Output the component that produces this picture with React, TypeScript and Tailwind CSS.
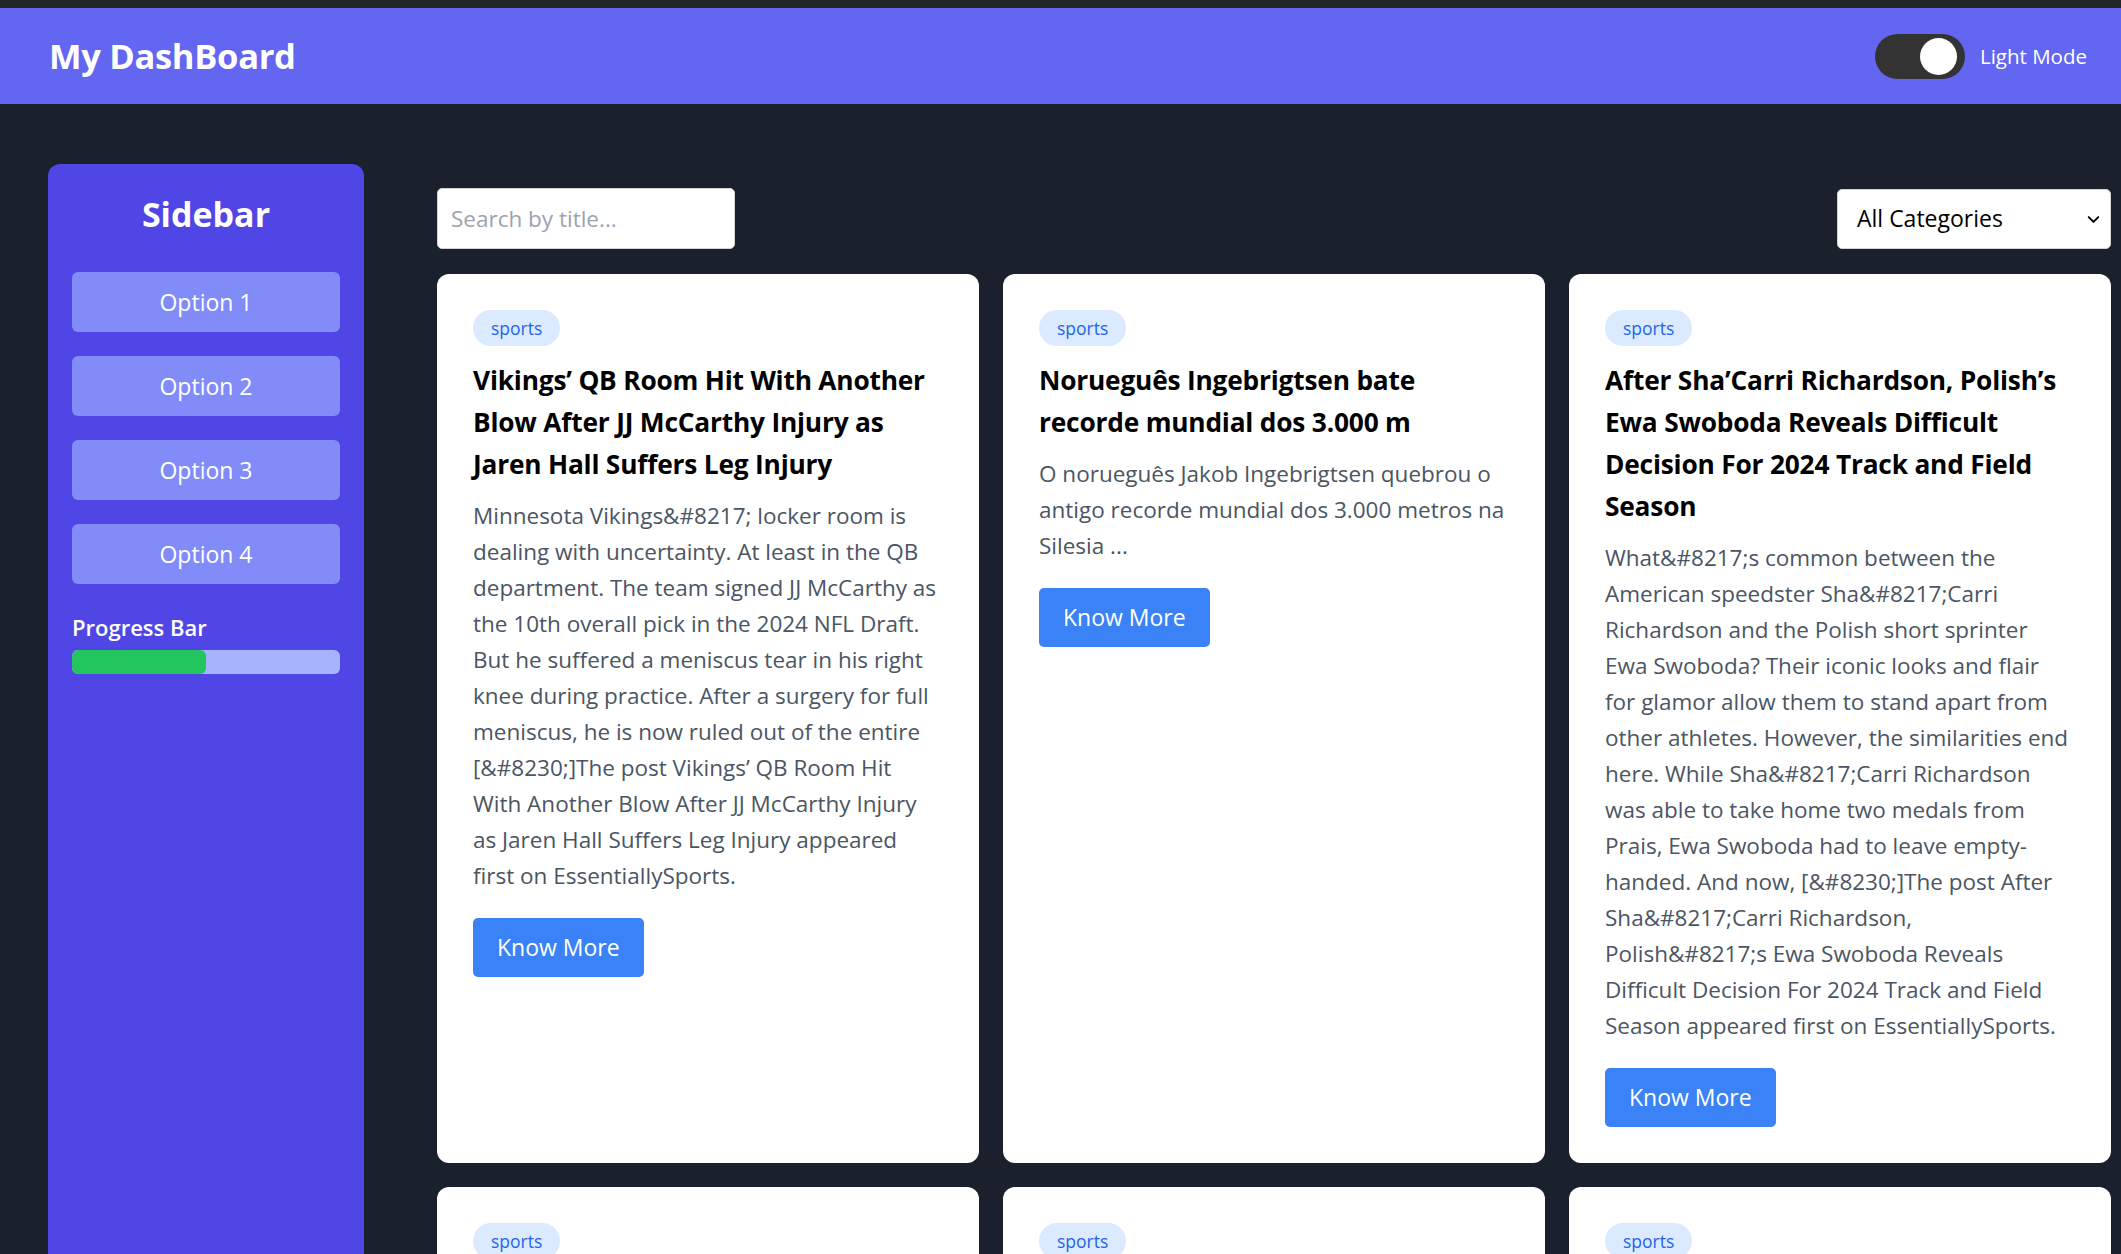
import { ChevronDown } from "lucide-react";

type Article = {
  id: number;
  category: string;
  title: string;
  description: string;
};

const ARTICLES: Article[] = [
  {
    id: 1,
    category: "sports",
    title: "Vikings’ QB Room Hit With Another Blow After JJ McCarthy Injury as Jaren Hall Suffers Leg Injury",
    description:
      "Minnesota Vikings&#8217; locker room is dealing with uncertainty. At least in the QB department. The team signed JJ McCarthy as the 10th overall pick in the 2024 NFL Draft. But he suffered a meniscus tear in his right knee during practice. After a surgery for full meniscus, he is now ruled out of the entire [&#8230;]The post Vikings’ QB Room Hit With Another Blow After JJ McCarthy Injury as Jaren Hall Suffers Leg Injury appeared first on EssentiallySports.",
  },
  {
    id: 2,
    category: "sports",
    title: "Norueguês Ingebrigtsen bate recorde mundial dos 3.000 m",
    description:
      "O norueguês Jakob Ingebrigtsen quebrou o antigo recorde mundial dos 3.000 metros na Silesia ...",
  },
  {
    id: 3,
    category: "sports",
    title: "After Sha’Carri Richardson, Polish’s Ewa Swoboda Reveals Difficult Decision For 2024 Track and Field Season",
    description:
      "What&#8217;s common between the American speedster Sha&#8217;Carri Richardson and the Polish short sprinter Ewa Swoboda? Their iconic looks and flair for glamor allow them to stand apart from other athletes. However, the similarities end here. While Sha&#8217;Carri Richardson was able to take home two medals from Prais, Ewa Swoboda had to leave empty-handed. And now, [&#8230;]The post After Sha&#8217;Carri Richardson, Polish&#8217;s Ewa Swoboda Reveals Difficult Decision For 2024 Track and Field Season appeared first on EssentiallySports.",
  },
  {
    id: 4,
    category: "sports",
    title: "Olympic trials: sprinters set for a thrilling weekend",
    description: "The fastest athletes in the country gather for the final selection races ...",
  },
  {
    id: 5,
    category: "sports",
    title: "Champions League draw sets up heavyweight clashes",
    description: "The group stage promises a series of classic encounters across Europe ...",
  },
  {
    id: 6,
    category: "sports",
    title: "Tennis star withdraws ahead of summer tournament",
    description: "A lingering wrist problem forces the former champion out of the event ...",
  },
];

const OPTIONS = ["Option 1", "Option 2", "Option 3", "Option 4"];

export default function App() {
  return (
    <div className="min-h-screen bg-[#1a202c] border-t-[8px] border-[#22262b] font-['Open_Sans',sans-serif]">
      {/* Header */}
      <header className="h-[96px] bg-[#6366f1] flex items-center justify-between pl-[49px] pr-[34px]">
        <h1 className="text-[34.5px] font-bold text-white tracking-[-0.3px]">My DashBoard</h1>
        <div className="flex items-center gap-[15px]">
          <div className="relative w-[90px] h-[45px] rounded-full bg-[#333333]">
            <span className="absolute right-[8px] top-[4px] w-[37px] h-[37px] rounded-full bg-white" />
          </div>
          <span className="text-[20.5px] text-white">Light Mode</span>
        </div>
      </header>

      <div className="flex pl-[48px] pr-[10px] pt-[60px]">
        {/* Sidebar */}
        <aside className="w-[316px] shrink-0 h-[1150px] bg-[#4f46e5] rounded-[12px] p-[24px]">
          <h2 className="text-[34px] leading-[52px] font-bold text-white text-center">Sidebar</h2>
          <div className="mt-[32px] flex flex-col gap-[24px]">
            {OPTIONS.map((opt) => (
              <button
                key={opt}
                className="h-[60px] w-full rounded-[6px] bg-[#818cf8] text-white text-[23px]"
              >
                {opt}
              </button>
            ))}
          </div>
          <p className="mt-[28px] text-[22px] leading-[30px] font-semibold text-white">Progress Bar</p>
          <div className="mt-[8px] h-[24px] w-full rounded-[6px] bg-[#a5b4fc] overflow-hidden">
            <div className="h-full w-1/2 bg-[#22c55e] rounded-[6px]" />
          </div>
        </aside>

        {/* Main */}
        <main className="ml-[73px] flex-1 pt-[24px]">
          <div className="flex items-center justify-between">
            <input
              type="text"
              placeholder="Search by title..."
              className="w-[298px] h-[61px] rounded-[5px] bg-white border border-[#d1d5db] px-[13px] text-[22.5px] text-gray-800 placeholder:text-[#9ca3af] outline-none"
            />
            <div className="relative w-[274px] h-[60px]">
              <select className="appearance-none w-full h-full rounded-[5px] bg-white border border-[#d1d5db] pl-[19px] text-[23px] text-black outline-none">
                <option>All Categories</option>
                <option>sports</option>
              </select>
              <ChevronDown
                className="absolute right-[8px] top-[21px] w-[19px] h-[19px] text-black pointer-events-none"
                strokeWidth={2.5}
              />
            </div>
          </div>

          <div className="mt-[25px] grid grid-cols-3 gap-[24px]">
            {ARTICLES.map((a) => (
              <div key={a.id} className="rounded-[12px] bg-white p-[36px] flex flex-col items-start">
                <span className="h-[36px] px-[18px] rounded-full bg-[#dbeafe] text-[#2563eb] text-[17.5px] flex items-center">
                  {a.category}
                </span>
                <h3 className="mt-[13px] text-[26.3px] leading-[42px] font-bold text-black tracking-[-0.2px]">
                  {a.title}
                </h3>
                <p className="mt-[13px] text-[22.5px] leading-[36px] text-[#4b5563]">{a.description}</p>
                <button className="mt-[24px] h-[59px] px-[24px] rounded-[5px] bg-[#3b82f6] text-white text-[23px]">
                  Know More
                </button>
              </div>
            ))}
          </div>
        </main>
      </div>
    </div>
  );
}
